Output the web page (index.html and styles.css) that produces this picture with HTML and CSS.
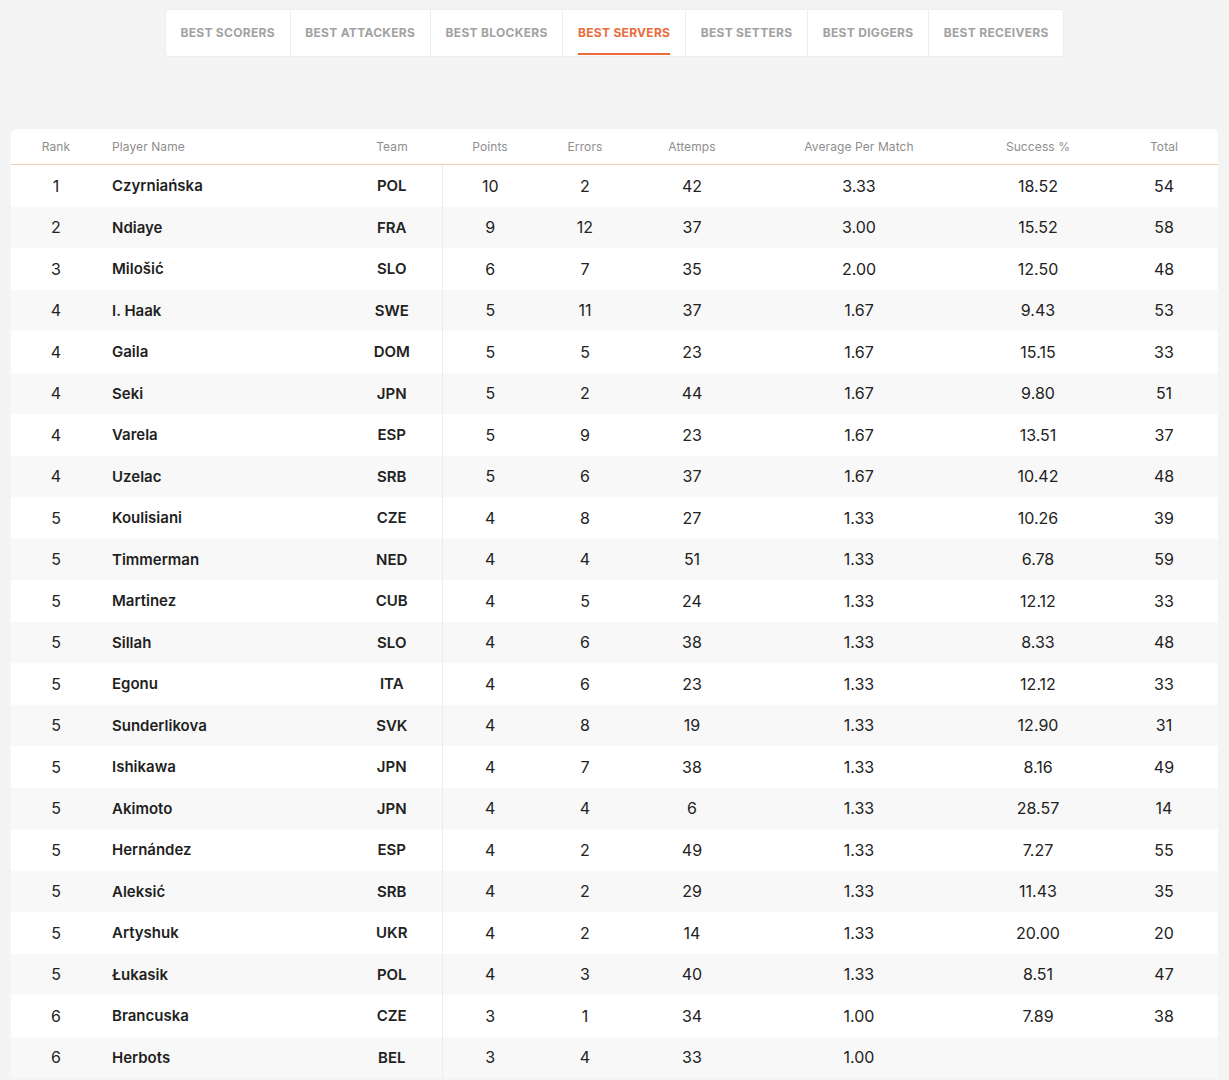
FILE: index.html
```html
<!DOCTYPE html>
<html lang="en">
<head>
<meta charset="utf-8">
<title>Best Servers</title>
<link rel="stylesheet" href="styles.css">
</head>
<body>
<nav class="tabs">
  <a class="tab">Best Scorers</a>
  <a class="tab">Best Attackers</a>
  <a class="tab">Best Blockers</a>
  <a class="tab active"><span>Best Servers</span></a>
  <a class="tab">Best Setters</a>
  <a class="tab">Best Diggers</a>
  <a class="tab">Best Receivers</a>
</nav>
<main class="board">
<table class="stats">
  <colgroup>
    <col class="c-rank"><col class="c-name"><col class="c-team"><col class="c-pts"><col class="c-err"><col class="c-att"><col class="c-avg"><col class="c-succ"><col class="c-tot">
  </colgroup>
  <thead>
    <tr><th>Rank</th><th class="left">Player Name</th><th>Team</th><th>Points</th><th>Errors</th><th>Attemps</th><th>Average Per Match</th><th>Success %</th><th>Total</th></tr>
  </thead>
  <tbody>
    <tr><td>1</td><td class="name">Czyrniańska</td><td class="team">POL</td><td>10</td><td>2</td><td>42</td><td>3.33</td><td>18.52</td><td>54</td></tr>
    <tr><td>2</td><td class="name">Ndiaye</td><td class="team">FRA</td><td>9</td><td>12</td><td>37</td><td>3.00</td><td>15.52</td><td>58</td></tr>
    <tr><td>3</td><td class="name">Milošić</td><td class="team">SLO</td><td>6</td><td>7</td><td>35</td><td>2.00</td><td>12.50</td><td>48</td></tr>
    <tr><td>4</td><td class="name">I. Haak</td><td class="team">SWE</td><td>5</td><td>11</td><td>37</td><td>1.67</td><td>9.43</td><td>53</td></tr>
    <tr><td>4</td><td class="name">Gaila</td><td class="team">DOM</td><td>5</td><td>5</td><td>23</td><td>1.67</td><td>15.15</td><td>33</td></tr>
    <tr><td>4</td><td class="name">Seki</td><td class="team">JPN</td><td>5</td><td>2</td><td>44</td><td>1.67</td><td>9.80</td><td>51</td></tr>
    <tr><td>4</td><td class="name">Varela</td><td class="team">ESP</td><td>5</td><td>9</td><td>23</td><td>1.67</td><td>13.51</td><td>37</td></tr>
    <tr><td>4</td><td class="name">Uzelac</td><td class="team">SRB</td><td>5</td><td>6</td><td>37</td><td>1.67</td><td>10.42</td><td>48</td></tr>
    <tr><td>5</td><td class="name">Koulisiani</td><td class="team">CZE</td><td>4</td><td>8</td><td>27</td><td>1.33</td><td>10.26</td><td>39</td></tr>
    <tr><td>5</td><td class="name">Timmerman</td><td class="team">NED</td><td>4</td><td>4</td><td>51</td><td>1.33</td><td>6.78</td><td>59</td></tr>
    <tr><td>5</td><td class="name">Martinez</td><td class="team">CUB</td><td>4</td><td>5</td><td>24</td><td>1.33</td><td>12.12</td><td>33</td></tr>
    <tr><td>5</td><td class="name">Sillah</td><td class="team">SLO</td><td>4</td><td>6</td><td>38</td><td>1.33</td><td>8.33</td><td>48</td></tr>
    <tr><td>5</td><td class="name">Egonu</td><td class="team">ITA</td><td>4</td><td>6</td><td>23</td><td>1.33</td><td>12.12</td><td>33</td></tr>
    <tr><td>5</td><td class="name">Sunderlikova</td><td class="team">SVK</td><td>4</td><td>8</td><td>19</td><td>1.33</td><td>12.90</td><td>31</td></tr>
    <tr><td>5</td><td class="name">Ishikawa</td><td class="team">JPN</td><td>4</td><td>7</td><td>38</td><td>1.33</td><td>8.16</td><td>49</td></tr>
    <tr><td>5</td><td class="name">Akimoto</td><td class="team">JPN</td><td>4</td><td>4</td><td>6</td><td>1.33</td><td>28.57</td><td>14</td></tr>
    <tr><td>5</td><td class="name">Hernández</td><td class="team">ESP</td><td>4</td><td>2</td><td>49</td><td>1.33</td><td>7.27</td><td>55</td></tr>
    <tr><td>5</td><td class="name">Aleksić</td><td class="team">SRB</td><td>4</td><td>2</td><td>29</td><td>1.33</td><td>11.43</td><td>35</td></tr>
    <tr><td>5</td><td class="name">Artyshuk</td><td class="team">UKR</td><td>4</td><td>2</td><td>14</td><td>1.33</td><td>20.00</td><td>20</td></tr>
    <tr><td>5</td><td class="name">Łukasik</td><td class="team">POL</td><td>4</td><td>3</td><td>40</td><td>1.33</td><td>8.51</td><td>47</td></tr>
    <tr><td>6</td><td class="name">Brancuska</td><td class="team">CZE</td><td>3</td><td>1</td><td>34</td><td>1.00</td><td>7.89</td><td>38</td></tr>
    <tr><td>6</td><td class="name">Herbots</td><td class="team">BEL</td><td>3</td><td>4</td><td>33</td><td>1.00</td><td></td><td></td></tr>
  </tbody>
</table>
</main>
</body>
</html>
```

FILE: styles.css
```css
html, body {
  margin: 0;
  padding: 0;
  background: #f4f4f4;
  font-family: Inter, "Noto Sans", "Liberation Sans", sans-serif;
  color: #222;
  overflow: hidden;
}

.tabs {
  display: flex;
  width: fit-content;
  margin: 10px auto 0;
  background: #fff;
  border-radius: 3px;
  box-shadow: 0 0 0 1px #ededed;
}

.tab {
  display: flex;
  align-items: center;
  height: 46px;
  padding: 0 14.7px 1px;
  box-sizing: border-box;
  font-size: 12px;
  font-weight: 700;
  letter-spacing: 0.3px;
  text-transform: uppercase;
  color: #a2a2a2;
  border-left: 1px solid #ededed;
  cursor: pointer;
}

.tab:first-child {
  border-left: none;
}

.tab.active {
  color: #ea6b3c;
  padding-bottom: 0;
}

.tab.active span {
  position: relative;
  display: flex;
  align-items: center;
  height: 46px;
  padding-bottom: 1px;
  box-sizing: border-box;
}

.tab.active span::after {
  content: "";
  position: absolute;
  left: 0;
  right: 0;
  bottom: 1px;
  height: 2px;
  background: #ea6b3c;
}

.board {
  margin: 73px 11px 0;
  background: #fff;
  border-radius: 6px 6px 0 0;
  overflow: hidden;
}

.stats {
  width: 100%;
  border-collapse: collapse;
  table-layout: fixed;
}

.c-rank { width: 90px; }
.c-name { width: 241px; }
.c-team { width: 100px; }
.c-pts  { width: 96px; }
.c-err  { width: 94px; }
.c-att  { width: 120px; }
.c-avg  { width: 214px; }
.c-succ { width: 144px; }
.c-tot  { width: auto; }

.stats th {
  height: 35px;
  padding: 0;
  font-size: 12px;
  font-weight: 400;
  color: #8e8e8e;
  text-align: center;
  border-bottom: 1px solid #f2cdb0;
  letter-spacing: 0.1px;
}

.stats th.left {
  text-align: left;
  padding-left: 11px;
}

.stats td {
  height: 41.5px;
  padding: 0;
  text-align: center;
  font-size: 16px;
  font-weight: 400;
  color: #222;
}

.stats tbody tr:nth-child(even) td {
  background: #f8f8f8;
}

.stats td.name {
  text-align: left;
  padding-left: 11px;
  font-weight: 600;
  font-size: 15px;
  color: #1f1f1f;
}

.stats td.team {
  font-weight: 600;
  font-size: 15px;
  border-right: 1px solid #ececec;
}
```
